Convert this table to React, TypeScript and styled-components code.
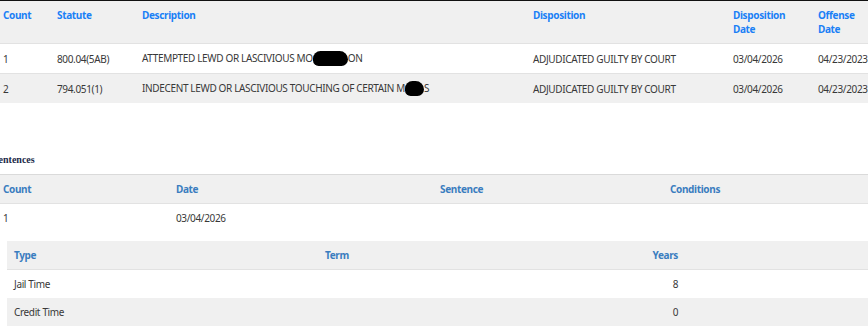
import styled, { createGlobalStyle } from 'styled-components';

const GlobalStyle = createGlobalStyle`
  html, body {
    margin: 0;
    padding: 0;
    background: #fff;
    overflow: hidden;
  }
  body {
    font-family: "Noto Sans", "Open Sans", Arial, sans-serif;
    font-size: 10px;
    letter-spacing: -0.35px;
    color: #383838;
  }
`;

const Page = styled.div`
  width: 868px;
  border-top: 1px solid #111;
`;

const Table = styled.table`
  width: 100%;
  border-collapse: collapse;
  table-layout: fixed;
`;

const Th = styled.th<{ $tone?: 'bright' | 'steel'; $align?: 'left' | 'right' }>`
  text-align: ${p => p.$align || 'left'};
  vertical-align: top;
  font-weight: 700;
  line-height: 14px;
  padding: 7px 3px;
  color: ${p => (p.$tone === 'steel' ? '#3a7dbf' : '#1a80f6')};
  background: #f0f0f0;
`;

const Tr = styled.tr<{ $shaded?: boolean }>`
  background: ${p => (p.$shaded ? '#f0f0f0' : '#fff')};
`;

const Td = styled.td<{ $align?: 'left' | 'right' }>`
  text-align: ${p => p.$align || 'left'};
  line-height: 14px;
  padding: 7px 3px;
  border-top: 1px solid #e2e2e2;
  white-space: nowrap;
  overflow: hidden;
`;

const Redact = styled.span<{ $w: number }>`
  display: inline-block;
  width: ${p => p.$w}px;
  height: 15px;
  background: #000;
  border-radius: 8px 9px 7px 6px;
  vertical-align: -4px;
`;

const SectionTitle = styled.h4`
  margin: 50px 0 7px -7px;
  font-family: "Liberation Serif", "Times New Roman", serif;
  font-size: 10px;
  font-weight: 700;
  letter-spacing: 0;
  color: #1b2a48;
  line-height: 14px;
`;

const SentenceTable = styled(Table)`
  border-top: 1px solid #dadada;
`;

const SentenceHead = styled.tr`
  border-bottom: 1px solid #e2e2e2;
`;

const NestedCell = styled.td`
  padding: 9px 0 0 7px;
`;

const NestedTh = styled(Th)`
  padding: 7px 7px;
  border-bottom: 1px solid #e2e2e2;
`;

const NestedTd = styled(Td)`
  padding: 7px 7px;
  border-top: none;
`;

const charges = [
  { count: '1', statute: '800.04(5AB)', desc: <>ATTEMPTED LEWD OR LASCIVIOUS MO<Redact $w={35} />ON</> },
  { count: '2', statute: '794.051(1)', desc: <>INDECENT LEWD OR LASCIVIOUS TOUCHING OF CERTAIN M<Redact $w={19} />S</> }
];

const terms = [
  { type: 'Jail Time', term: '', years: '8' },
  { type: 'Credit Time', term: '', years: '0' }
];

function App() {
  return (
    <Page>
      <GlobalStyle />
      <Table>
        <colgroup>
          <col style={{ width: 54 }} />
          <col style={{ width: 85 }} />
          <col style={{ width: 391 }} />
          <col style={{ width: 200 }} />
          <col style={{ width: 85 }} />
          <col style={{ width: 53 }} />
        </colgroup>
        <thead>
          <tr>
            <Th>Count</Th>
            <Th>Statute</Th>
            <Th>Description</Th>
            <Th>Disposition</Th>
            <Th>Disposition<br />Date</Th>
            <Th>Offense<br />Date</Th>
          </tr>
        </thead>
        <tbody>
          {charges.map((c, i) =>
            <Tr key={c.count} $shaded={i % 2 === 1}>
              <Td>{c.count}</Td>
              <Td>{c.statute}</Td>
              <Td>{c.desc}</Td>
              <Td>ADJUDICATED GUILTY BY COURT</Td>
              <Td>03/04/2026</Td>
              <Td>04/23/2023</Td>
            </Tr>
          )}
        </tbody>
      </Table>

      <SectionTitle>Sentences</SectionTitle>
      <SentenceTable>
        <colgroup>
          <col style={{ width: 173 }} />
          <col style={{ width: 264 }} />
          <col style={{ width: 230 }} />
          <col />
        </colgroup>
        <thead>
          <SentenceHead>
            <Th $tone="steel">Count</Th>
            <Th $tone="steel">Date</Th>
            <Th $tone="steel">Sentence</Th>
            <Th $tone="steel">Conditions</Th>
          </SentenceHead>
        </thead>
        <tbody>
          <Tr>
            <Td>1</Td>
            <Td>03/04/2026</Td>
            <Td></Td>
            <Td></Td>
          </Tr>
          <tr>
            <NestedCell colSpan={4}>
              <Table>
                <colgroup>
                  <col style={{ width: 311 }} />
                  <col style={{ width: 222 }} />
                  <col style={{ width: 145 }} />
                  <col />
                </colgroup>
                <thead>
                  <tr>
                    <NestedTh $tone="steel">Type</NestedTh>
                    <NestedTh $tone="steel">Term</NestedTh>
                    <NestedTh $tone="steel" $align="right">Years</NestedTh>
                    <NestedTh $tone="steel"></NestedTh>
                  </tr>
                </thead>
                <tbody>
                  {terms.map((t, i) =>
                    <Tr key={t.type} $shaded={i % 2 === 1}>
                      <NestedTd>{t.type}</NestedTd>
                      <NestedTd>{t.term}</NestedTd>
                      <NestedTd $align="right">{t.years}</NestedTd>
                      <NestedTd></NestedTd>
                    </Tr>
                  )}
                </tbody>
              </Table>
            </NestedCell>
          </tr>
        </tbody>
      </SentenceTable>
    </Page>
  );
}

export default App;
